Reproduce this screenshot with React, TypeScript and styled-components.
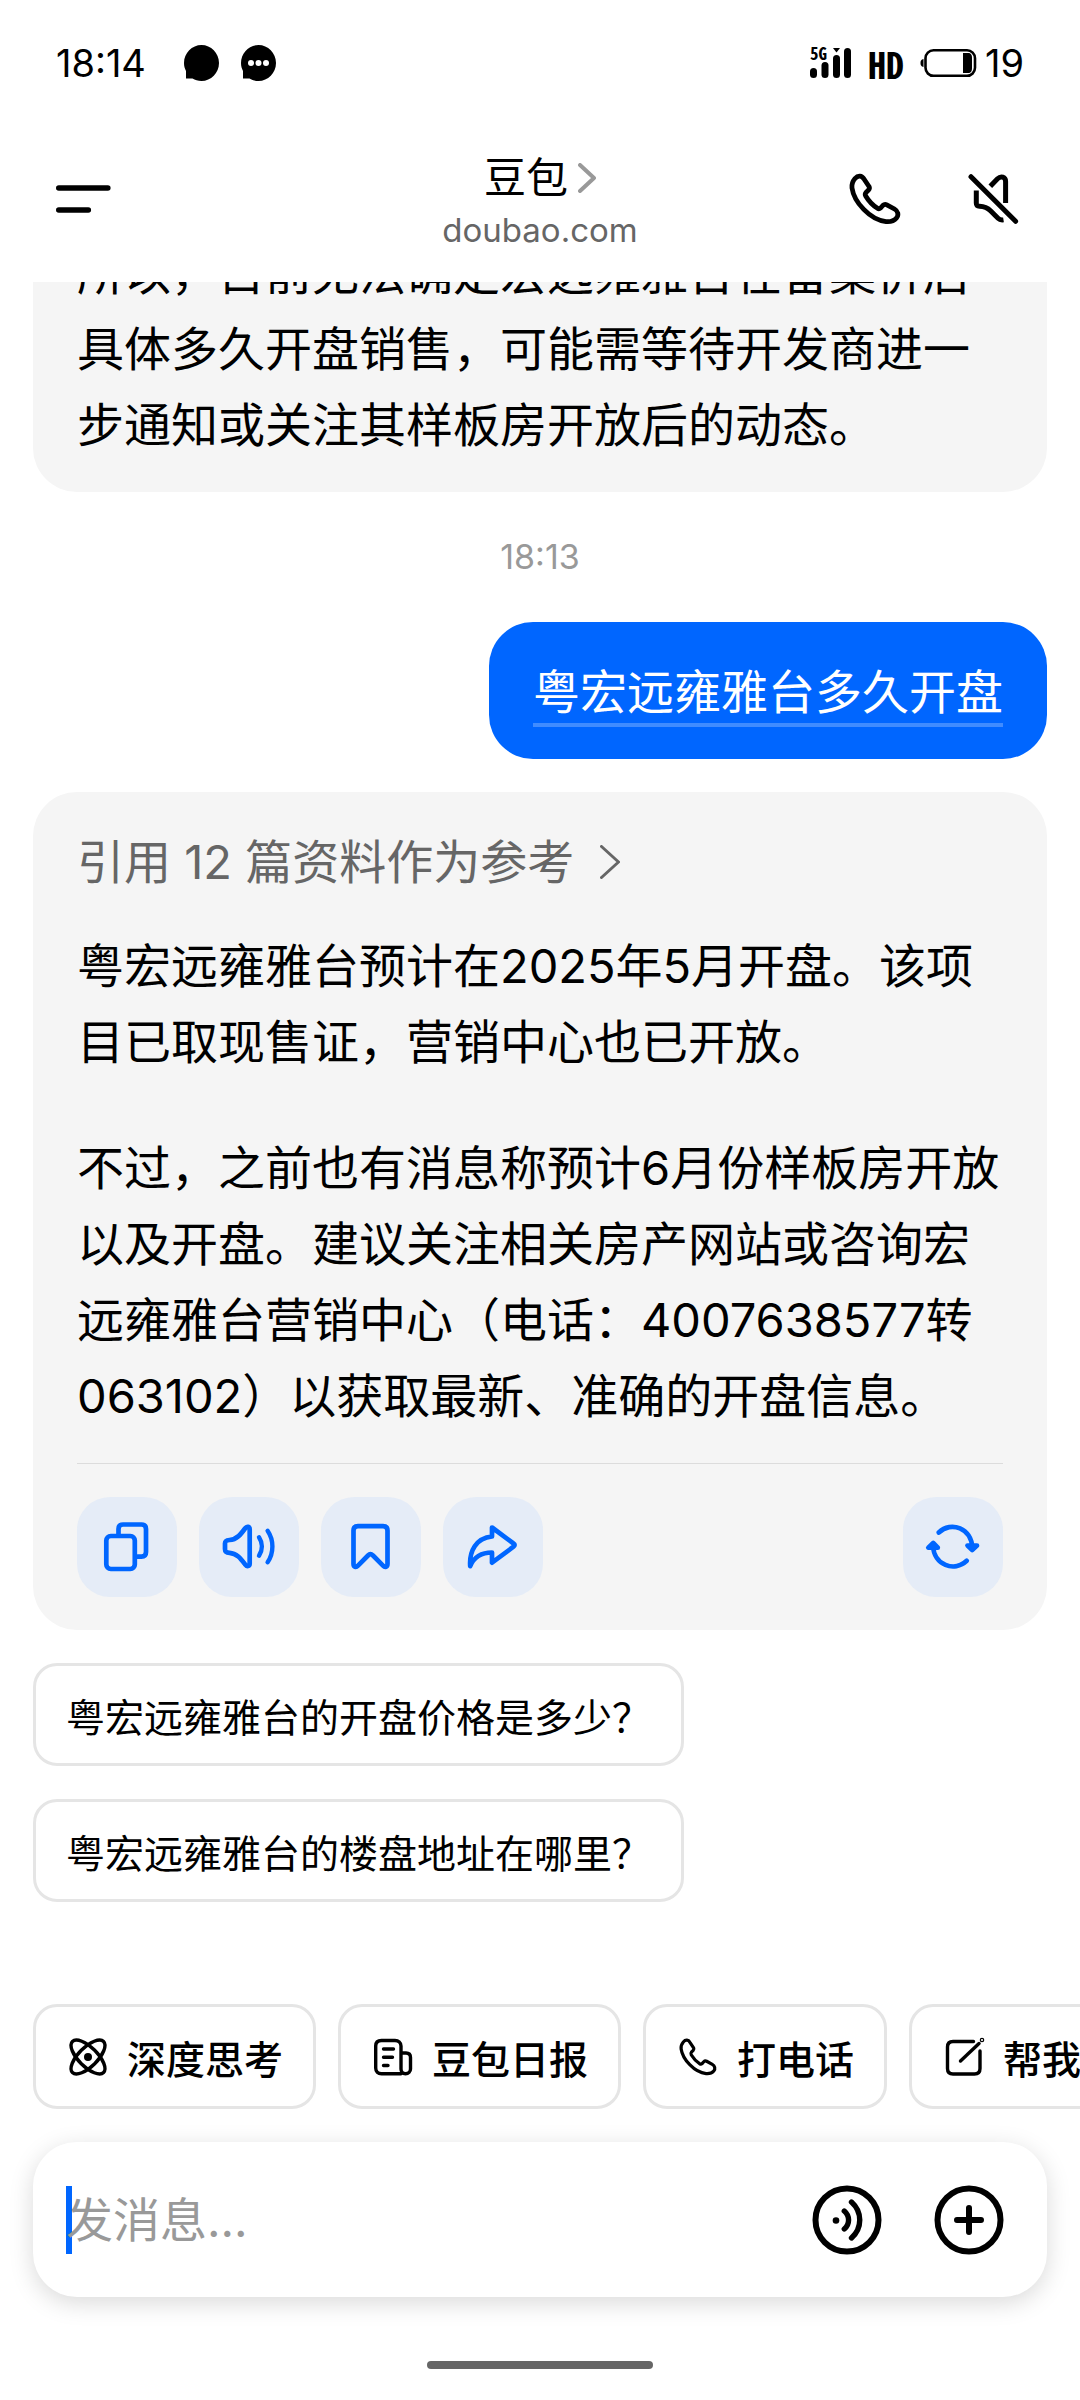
import React from "react";
import styled, { createGlobalStyle } from "styled-components";

const color = {
  ink: "#000000",
  muted: "#666666",
  faint: "#999999",
  line: "#e5e5e5",
  bubble: "#f5f5f5",
  action: "#e5ecf7",
  blue: "#0066ff",
};

const Global = createGlobalStyle`
  *, *::before, *::after { box-sizing: border-box; }
  body {
    margin: 0;
    background: #ffffff;
    color: ${color.ink};
    font-family: Inter, "Noto Sans CJK SC", sans-serif;
  }
  button, input { font: inherit; color: inherit; }
  button { margin: 0; padding: 0; border: 0; background: none; cursor: pointer; }
  svg { display: block; flex: none; fill: none; stroke: currentColor; }
`;

const Screen = styled.div`
  display: flex;
  flex-direction: column;
  height: 100vh;
  overflow: hidden;
`;

const StatusBar = styled.div`
  display: flex;
  align-items: center;
  justify-content: space-between;
  flex: none;
  height: 126px;
  padding: 0 56px;
  font-size: 38px;
  line-height: 44px;
`;

const StatusGroup = styled.div<{ $gap: number }>`
  display: flex;
  align-items: center;
  gap: ${(p) => p.$gap}px;
`;

const Clock = styled.time`
  margin-right: 16px;
`;

const HdMark = styled.span`
  font-family: "Noto Sans Mono CJK SC", "Liberation Mono", monospace;
  font-size: 36px;
  font-weight: 700;
`;

const Header = styled.header`
  display: grid;
  grid-template-columns: 1fr auto 1fr;
  align-items: center;
  flex: none;
  height: 156px;
  padding: 0 56px 10px;
`;

const HeaderActions = styled.div`
  display: flex;
  justify-content: flex-end;
  gap: 59px;
`;

const IconButton = styled.button`
  display: flex;
  align-items: center;
  justify-content: center;
`;

const MenuButton = styled(IconButton)`
  justify-self: start;
`;

const TitleBlock = styled.div`
  display: flex;
  flex-direction: column;
  align-items: center;
`;

const Title = styled.h1`
  margin: 0;
  font-size: 42px;
  font-weight: 400;
  line-height: 62px;
`;

const TitleButton = styled.button`
  display: flex;
  align-items: center;
  gap: 10px;
`;

const TitleArrow = styled.span`
  color: ${color.faint};
`;

const Subtitle = styled.span`
  font-size: 33px;
  line-height: 42px;
  color: ${color.muted};
`;

const Chat = styled.main`
  display: flex;
  flex-direction: column;
  justify-content: flex-end;
  gap: 33px;
  flex: 1;
  min-height: 0;
  overflow: hidden;
  padding: 0 33px 102px;
`;

const Bubble = styled.article`
  flex: none;
  padding: 32px 44px 29px;
  border-radius: 44px;
  background: ${color.bubble};
  font-size: 47px;
  line-height: 76px;
`;

const Paragraph = styled.p`
  margin: 0;
  & + & {
    margin-top: 50px;
  }
`;

const Stamp = styled.time`
  flex: none;
  font-size: 34px;
  line-height: 64px;
  text-align: center;
  color: ${color.faint};
`;

const OwnBubble = styled.article`
  flex: none;
  align-self: flex-end;
  padding: 39px 44px 32px;
  border-radius: 44px;
  background: ${color.blue};
  color: #ffffff;
  font-size: 47px;
  line-height: 62px;
`;

const OwnText = styled.p`
  margin: 0;
  border-bottom: 4px solid #408cff;
`;

const SourceButton = styled.button`
  display: flex;
  align-items: center;
  gap: 26px;
  margin-bottom: 28px;
  color: ${color.muted};
`;

const ActionBar = styled.div`
  display: flex;
  gap: 22px;
  margin-top: 29px;
  padding: 33px 0 4px;
  border-top: 1px solid #dcdcdc;
`;

const ActionButton = styled(IconButton)<{ $end?: boolean }>`
  width: 100px;
  height: 100px;
  margin-left: ${(p) => (p.$end ? "auto" : "0")};
  border-radius: 33px;
  background: ${color.action};
  color: ${color.blue};
`;

const Suggestion = styled.button`
  flex: none;
  align-self: flex-start;
  height: 103px;
  padding: 0 30px;
  border: 3px solid ${color.line};
  border-radius: 24px;
  font-size: 39px;
`;

const ChipRow = styled.nav`
  display: flex;
  gap: 22px;
  flex: none;
  padding: 0 33px;
  overflow: hidden;
`;

const Chip = styled.button`
  display: flex;
  align-items: center;
  gap: 17px;
  flex: none;
  height: 105px;
  padding: 0 30px;
  border: 3px solid ${color.line};
  border-radius: 24px;
  font-size: 39px;
  font-weight: 500;
`;

const Composer = styled.form`
  display: flex;
  align-items: center;
  gap: 52px;
  flex: none;
  height: 155px;
  margin: 33px 33px 64px;
  padding: 0 43px 0 33px;
  border-radius: 44px;
  background: #ffffff;
  box-shadow: 0 6px 24px rgba(0, 0, 0, 0.15);
`;

const Field = styled.div`
  position: relative;
  flex: 1;
  min-width: 0;
`;

const Caret = styled.span`
  position: absolute;
  top: 0;
  left: 0;
  width: 6px;
  height: 68px;
  background: ${color.blue};
`;

const MessageInput = styled.input`
  position: relative;
  display: block;
  width: 100%;
  height: 68px;
  padding: 0;
  border: 0;
  outline: 0;
  background: transparent;
  font-size: 47px;
  &::placeholder {
    color: ${color.faint};
    opacity: 1;
  }
`;

const HomeBar = styled.div`
  flex: none;
  align-self: center;
  width: 226px;
  height: 8px;
  margin-bottom: 31px;
  border-radius: 4px;
  background: ${color.muted};
`;

const round = { strokeLinecap: "round", strokeLinejoin: "round" } as const;

function ChatDot({ dots }: { dots?: boolean }) {
  return (
    <svg width="35" height="36" viewBox="0 0 35 36">
      <path
        d="M17.5 0C27 0 35 8 35 18S27 36 17.5 36C13.900 36 11 35 8.500 33.500H2V26C.7 23.500 0 21 0 18C0 8 8 0 17.500 0Z"
        fill="currentColor"
        stroke="none"
      />
      {dots && (
        <g fill="#ffffff" stroke="none">
          <circle cx="10" cy="18" r="3" />
          <circle cx="17.500" cy="18" r="3" />
          <circle cx="25" cy="18" r="3" />
        </g>
      )}
    </svg>
  );
}

function SignalIcon() {
  return (
    <svg width="42" height="32" viewBox="0 0 42 32">
      <g fill="currentColor" stroke="none">
        <text
          x="0"
          y="13"
          fontFamily="Noto Sans Mono CJK SC, Liberation Mono, monospace"
          fontWeight="700"
          fontSize="17"
        >
          5G
        </text>
        <rect x="0" y="21" width="7" height="10" rx="3.500" />
        <rect x="11.500" y="15" width="7" height="16" rx="3.500" />
        <rect x="23" y="8" width="7" height="23" rx="3.500" />
        <rect x="34" y="1" width="7" height="30" rx="3.500" />
        <path d="M23 1h7l-3.500 4.500Z" />
      </g>
    </svg>
  );
}

function BatteryIcon() {
  return (
    <svg width="57" height="30" viewBox="0 0 57 30">
      <path d="M3.500 11v8C1 18.500 .5 17 .5 15S1 11.500 3.500 11Z" fill="currentColor" stroke="none" />
      <rect x="5.500" y="2.300" width="49.500" height="25.500" rx="8" strokeWidth="2.600" />
      <path d="M43 5h5c3 0 4 2 4 5v10c0 3-1 5-4 5h-5Z" fill="currentColor" stroke="none" />
    </svg>
  );
}

function MenuIcon() {
  return (
    <svg width="56" height="30" viewBox="0 0 56 30" strokeWidth="5.600" {...round}>
      <path d="M2.800 4h49M2.800 26h29.500" />
    </svg>
  );
}

function ChevronIcon({ width, height, weight }: { width: number; height: number; weight: number }) {
  const inset = weight / 2;
  return (
    <svg width={width} height={height} viewBox={`0 0 ${width} ${height}`} strokeWidth={weight} {...round}>
      <path d={`M${inset} ${inset}L${width - inset} ${height / 2}L${inset} ${height - inset}`} />
    </svg>
  );
}

function PhoneIcon({ size, weight }: { size: number; weight: number }) {
  return (
    <svg width={size} height={size} viewBox="0 0 60 60" strokeWidth={weight} {...round}>
      <path d="M10 9.500C13 6 17 6.500 19 10L24 17.500C24.800 19 24.500 20 23.500 21L21 23.500C20 24.700 20 25.800 20.700 27C24 32.500 28.500 36.800 32.500 39.300C33.500 40 34.700 39.800 35.600 39L37.800 36.500C39 35.300 40.300 35 41.800 35.800L49.500 40C53 42 54 46 51.500 49C49 52 45.500 53 41 52.600C25 51 9 33 7 19C6.500 15.500 7.500 12.500 10 9.500Z" />
    </svg>
  );
}

function MuteIcon() {
  return (
    <svg width="60" height="60" viewBox="0 0 60 60" strokeWidth="5">
      <path d="M7 7.700L51.600 52.300" strokeLinecap="round" />
      <path d="M26.300 17.300L33.500 9.800C37 6.500 41.600 8 41.600 12.500V34" />
      <path d="M12.300 21.500V34C12.300 36.500 13.300 37.200 15.500 37.300C20.500 37.500 23.500 38.800 26.500 41.800L34 49.300C35.500 50.800 37 51.300 39.500 50.900" />
    </svg>
  );
}

const actionProps = { width: 100, height: 100, viewBox: "0 0 100 100", strokeWidth: 4.7, ...round };

function CopyIcon() {
  return (
    <svg {...actionProps}>
      <rect x="29.300" y="39" width="28.500" height="33" rx="4.500" />
      <path d="M41.500 37V32C41.500 29 43 27.500 46 27.500H64.500C67.500 27.500 69 29 69 32V55C69 58 67.500 59.700 64.500 59.700H60.500" />
    </svg>
  );
}

function SpeakIcon() {
  return (
    <svg {...actionProps}>
      <path d="M30.500 43C38 42.500 42 37 46 31.500C48 28.800 50.700 29.500 50.700 32.500V66.500C50.700 69.500 48 70 46 67.300C42 62 38 56.300 30.500 55.800C27.500 55.700 26 55 26 52V46.500C26 44 27.500 43.200 30.500 43Z" />
      <path d="M60 40.300C63.800 46 63.800 53 60 58.700M68.600 33.700C75 43 75 56 68.600 65.300" strokeWidth="4.400" />
    </svg>
  );
}

function BookmarkIcon() {
  return (
    <svg {...actionProps}>
      <path d="M32.500 33.500C32.500 30.500 34 29.200 37 29.200H62C65 29.200 66.500 30.500 66.500 33.500V67C66.500 70 64 70.700 62 68.700L52 58.500C50 56.700 48.800 56.700 47 58.500L37 68.700C35 70.700 32.500 70 32.500 67Z" />
    </svg>
  );
}

function ShareIcon() {
  return (
    <svg {...actionProps}>
      <path d="M49 39.500V30.500L70.500 46.500C72 47.500 72 48.500 70.500 49.700L49 65.700V55.500C38.500 55.500 31.500 59 27.200 69C26.200 54 33 41 49 39.500Z" />
    </svg>
  );
}

function RefreshIcon() {
  return (
    <svg {...actionProps}>
      <path d="M35.800 35.500C48 23.500 69 31.500 69.200 51M63.700 63.800C51.500 75.500 30.500 68 30.200 49" />
      <path d="M64.500 48.500H74L69.200 53Z M25.300 50.700H34.800L30.200 46Z" fill="currentColor" />
    </svg>
  );
}

const chipProps = { width: 44, height: 44, viewBox: "0 0 44 44", strokeWidth: 3.4, ...round };

function AtomIcon() {
  return (
    <svg {...chipProps}>
      <ellipse cx="22" cy="22" rx="22" ry="9.500" transform="rotate(45 22 22)" />
      <ellipse cx="22" cy="22" rx="22" ry="9.500" transform="rotate(-45 22 22)" />
      <circle cx="22" cy="22" r="4" fill="currentColor" stroke="none" />
    </svg>
  );
}

function NewsIcon() {
  return (
    <svg {...chipProps}>
      <path d="M30 38.700H10.500C7 38.700 4.700 36.500 4.700 33V11C4.700 7.500 7 5.500 10.500 5.500H24C27.500 5.500 30 7.500 30 11V34C30 36.500 31.500 38.700 34.500 38.700C37.500 38.700 39.500 36.500 39.500 34V22.500C39.500 19.500 38 18 35 18H30.500" />
      <path d="M12.500 14H22.500M12.500 22.300H21.500M12.500 30.500H17" />
    </svg>
  );
}

function EditIcon() {
  return (
    <svg {...chipProps}>
      <path d="M31.500 6.500H11C7.500 6.500 5.500 8.500 5.500 12V33.500C5.500 37 7.500 39 11 39H32.500C36 39 38 37 38 33.500V16" />
      <path d="M18.500 26L37 8.500" />
      <circle cx="40" cy="5" r=".6" />
    </svg>
  );
}

const composerProps = { width: 70, height: 70, viewBox: "0 0 70 70", strokeWidth: 6, ...round };

function VoiceIcon() {
  return (
    <svg {...composerProps}>
      <circle cx="35" cy="35" r="31.500" />
      <circle cx="24" cy="35.500" r="3.300" fill="currentColor" stroke="none" />
      <path d="M32.300 26C38 31 38 39 32.300 44M39.500 17C50.500 27 50.500 43 39.500 53" strokeWidth="5.400" />
    </svg>
  );
}

function PlusIcon() {
  return (
    <svg {...composerProps}>
      <circle cx="35" cy="35" r="31.500" />
      <path d="M35 23V47M23 35H47" />
    </svg>
  );
}

const chips = [
  { label: "深度思考", icon: <AtomIcon /> },
  { label: "豆包日报", icon: <NewsIcon /> },
  { label: "打电话", icon: <PhoneIcon size={44} weight={4.4} /> },
  { label: "帮我写作", icon: <EditIcon /> },
];

const suggestions = ["粤宏远雍雅台的开盘价格是多少？", "粤宏远雍雅台的楼盘地址在哪里？"];

export default function App() {
  return (
    <Screen>
      <Global />
      <StatusBar>
        <StatusGroup $gap={22}>
          <Clock>18:14</Clock>
          <ChatDot />
          <ChatDot dots />
        </StatusGroup>
        <StatusGroup $gap={16}>
          <SignalIcon />
          <HdMark>HD</HdMark>
          <StatusGroup $gap={8}>
            <BatteryIcon />
            <span>19</span>
          </StatusGroup>
        </StatusGroup>
      </StatusBar>

      <Header>
        <MenuButton aria-label="菜单">
          <MenuIcon />
        </MenuButton>
        <TitleBlock>
          <Title>
            <TitleButton>
              豆包
              <TitleArrow>
                <ChevronIcon width={18} height={30} weight={4} />
              </TitleArrow>
            </TitleButton>
          </Title>
          <Subtitle>doubao.com</Subtitle>
        </TitleBlock>
        <HeaderActions>
          <IconButton aria-label="打电话">
            <PhoneIcon size={60} weight={4.8} />
          </IconButton>
          <IconButton aria-label="静音">
            <MuteIcon />
          </IconButton>
        </HeaderActions>
      </Header>

      <Chat>
        <Bubble>
          <Paragraph>
            所以，目前无法确定宏远雍雅台在备案价后具体多久开盘销售，可能需等待开发商进一步通知或关注其样板房开放后的动态。
          </Paragraph>
        </Bubble>
        <Stamp>18:13</Stamp>
        <OwnBubble>
          <OwnText>粤宏远雍雅台多久开盘</OwnText>
        </OwnBubble>
        <Bubble>
          <SourceButton>
            引用 12 篇资料作为参考
            <ChevronIcon width={20} height={34} weight={3} />
          </SourceButton>
          <Paragraph>粤宏远雍雅台预计在2025年5月开盘。该项目已取现售证，营销中心也已开放。</Paragraph>
          <Paragraph>
            不过，之前也有消息称预计6月份样板房开放以及开盘。建议关注相关房产网站或咨询宏远雍雅台营销中心（电话：4007638577转063102）以获取最新、准确的开盘信息。
          </Paragraph>
          <ActionBar>
            <ActionButton aria-label="复制">
              <CopyIcon />
            </ActionButton>
            <ActionButton aria-label="朗读">
              <SpeakIcon />
            </ActionButton>
            <ActionButton aria-label="收藏">
              <BookmarkIcon />
            </ActionButton>
            <ActionButton aria-label="分享">
              <ShareIcon />
            </ActionButton>
            <ActionButton aria-label="重新生成" $end>
              <RefreshIcon />
            </ActionButton>
          </ActionBar>
        </Bubble>
        {suggestions.map((text) => (
          <Suggestion key={text}>{text}</Suggestion>
        ))}
      </Chat>

      <ChipRow aria-label="快捷功能">
        {chips.map((chip) => (
          <Chip key={chip.label}>
            {chip.icon}
            {chip.label}
          </Chip>
        ))}
      </ChipRow>

      <Composer onSubmit={(event) => event.preventDefault()}>
        <Field>
          <Caret />
          <MessageInput type="text" aria-label="发消息" placeholder="发消息..." />
        </Field>
        <IconButton type="button" aria-label="语音输入">
          <VoiceIcon />
        </IconButton>
        <IconButton type="button" aria-label="更多">
          <PlusIcon />
        </IconButton>
      </Composer>
      <HomeBar />
    </Screen>
  );
}
